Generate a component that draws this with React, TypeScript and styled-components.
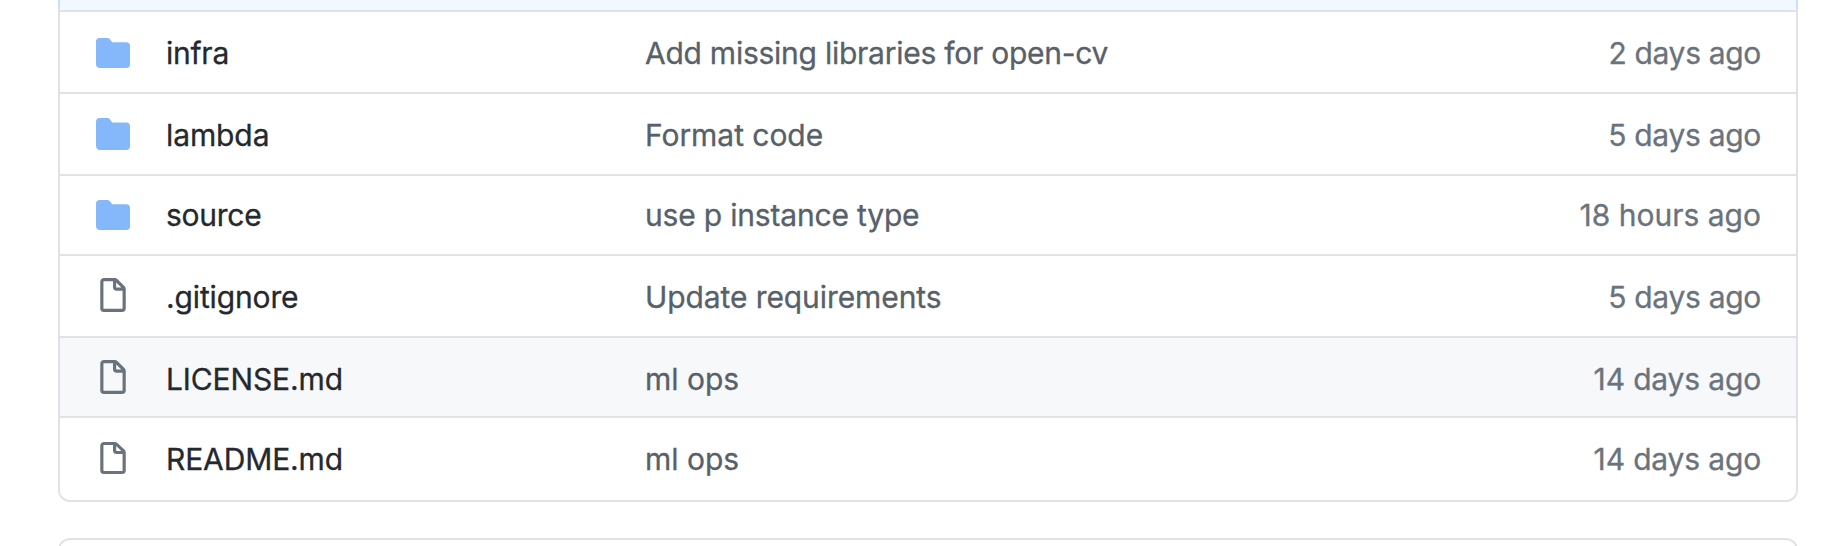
import React from "react";
import styled, { createGlobalStyle } from "styled-components";

const GlobalStyle = createGlobalStyle`
  *, *::before, *::after { box-sizing: border-box; }
  html, body { margin: 0; background: #fff; overflow: hidden; }
  body { font-family: Inter, "Liberation Sans", sans-serif; font-size: 30px; line-height: 36px; -webkit-text-stroke: 0.3px; }
`;

const Page = styled.main`
  height: 546px;
  padding: 0 34px 0 58px;
  overflow: hidden;
  background: #fff;
`;

const CommitBar = styled.div`
  height: 12px;
  background: #f1f8ff;
  border: solid #c8e1ff;
  border-width: 0 2px;
`;

const FileList = styled.div`
  margin-top: -2px;
  border: 2px solid #e1e2e8;
  border-top: 0;
  border-radius: 0 0 12px 12px;
  overflow: hidden;
`;

const Row = styled.div<{ $height: number; $active?: boolean; $lift: number }>`
  display: grid;
  grid-template-columns: 36px 34px 479px 1fr auto;
  align-items: start;
  height: ${(p) => p.$height}px;
  padding: ${(p) => 23 - p.$lift}px 35px 0 36px;
  border-top: 2px solid #e1e2e8;
  background: ${(p) => (p.$active ? "#f6f8fa" : "#fff")};
  white-space: nowrap;
`;

const IconCell = styled.span<{ $top: number }>`
  display: flex;
  margin-top: ${(p) => p.$top}px;
  svg { display: block; }
`;

const Cell = styled.span<{ $track: number }>`
  letter-spacing: ${(p) => p.$track}px;
`;

const Name = styled(Cell)`
  grid-column: 3;
  color: #24292e;
`;

const Message = styled(Cell)`
  color: #586069;
`;

const Age = styled(Cell)`
  color: #6a737d;
`;

const NextBox = styled.div`
  height: 60px;
  margin-top: 36px;
  border: 2px solid #e1e2e8;
  border-radius: 12px;
`;

const FolderIcon = ({ height }: { height: number }) => (
  <svg width="34" height={height} viewBox="0 1 16 14" preserveAspectRatio="none" fill="#85b8fa">
    <path d="M1.75 1A1.75 1.75 0 000 2.75v10.5C0 14.216.784 15 1.75 15h12.5A1.75 1.75 0 0016 13.25v-8.5A1.75 1.75 0 0014.25 3h-6.5a.25.25 0 01-.2-.1l-.9-1.2c-.33-.44-.85-.7-1.4-.7h-3.5z" />
  </svg>
);

const FileIcon = ({ height }: { height: number }) => (
  <svg width="34" height={height} viewBox="0 0 16 16" preserveAspectRatio="none" fill="#6a737d">
    <path
      fillRule="evenodd"
      d="M3.75 1.5a.25.25 0 00-.25.25v12.5c0 .138.112.25.25.25h8.5a.25.25 0 00.25-.25V6h-2.75A1.75 1.75 0 018 4.25V1.5H3.75zm5.75.56v2.19c0 .138.112.25.25.25h2.19L9.5 2.06zM2 1.75C2 .784 2.784 0 3.75 0h5.086c.464 0 .909.184 1.237.513l3.414 3.414c.329.328.513.773.513 1.237v9.086A1.75 1.75 0 0112.25 16h-8.5A1.75 1.75 0 012 14.25V1.75z"
    />
  </svg>
);

type Entry = {
  kind: "folder" | "file";
  name: string;
  message: string;
  age: string;
  track: [number, number, number];
  height: number;
  iconTop: number;
  iconHeight: number;
  lift?: number;
  active?: boolean;
};

const entries: Entry[] = [
  { kind: "folder", name: "infra", message: "Add missing libraries for open-cv", age: "2 days ago", track: [-0.25, -0.25, -0.33], height: 82, iconTop: 28, iconHeight: 30 },
  { kind: "folder", name: "lambda", message: "Format code", age: "5 days ago", track: [-0.1, -0.05, -0.3], height: 82, iconTop: 26, iconHeight: 32 },
  { kind: "folder", name: "source", message: "use p instance type", age: "18 hours ago", track: [-0.25, -0.18, 0], height: 80, iconTop: 26, iconHeight: 30, lift: 2 },
  { kind: "file", name: ".gitignore", message: "Update requirements", age: "5 days ago", track: [-0.13, -0.09, -0.3], height: 82, iconTop: 24, iconHeight: 34 },
  { kind: "file", name: "LICENSE.md", message: "ml ops", age: "14 days ago", track: [-0.12, 0, -0.16], height: 80, iconTop: 24, iconHeight: 34, active: true },
  { kind: "file", name: "README.md", message: "ml ops", age: "14 days ago", track: [-0.12, 0, -0.16], height: 84, iconTop: 26, iconHeight: 32 },
];

export default function App() {
  return (
    <>
      <GlobalStyle />
      <Page>
        <CommitBar />
        <FileList>
          {entries.map((e) => {
            const lift = e.lift ?? 0;
            return (
              <Row key={e.name} $height={e.height} $active={e.active} $lift={lift}>
                <IconCell $top={e.iconTop - 25 + lift}>
                  {e.kind === "folder" ? <FolderIcon height={e.iconHeight} /> : <FileIcon height={e.iconHeight} />}
                </IconCell>
                <Name $track={e.track[0]}>{e.name}</Name>
                <Message $track={e.track[1]}>{e.message}</Message>
                <Age $track={e.track[2]}>{e.age}</Age>
              </Row>
            );
          })}
        </FileList>
        <NextBox />
      </Page>
    </>
  );
}
